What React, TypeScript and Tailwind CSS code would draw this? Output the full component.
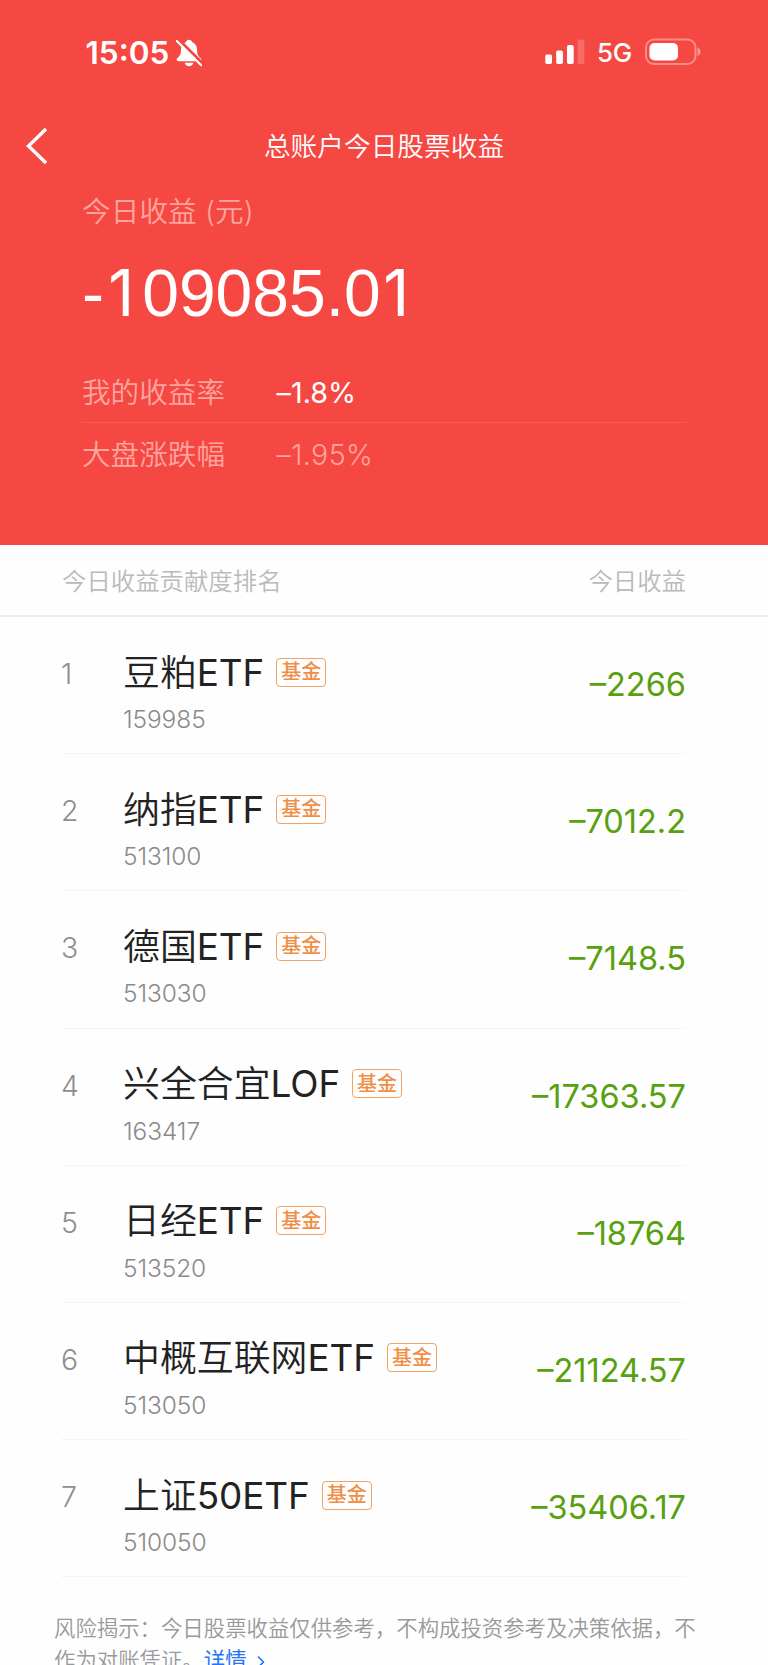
import { ChevronRight } from 'lucide-react';

type Holding = { name: string; suffix: string; code: string; profit: string };

const holdings: Holding[] = [
  { name: '豆粕', suffix: 'ETF', code: '159985', profit: '–2266' },
  { name: '纳指', suffix: 'ETF', code: '513100', profit: '–7012.2' },
  { name: '德国', suffix: 'ETF', code: '513030', profit: '–7148.5' },
  { name: '兴全合宜', suffix: 'LOF', code: '163417', profit: '–17363.57' },
  { name: '日经', suffix: 'ETF', code: '513520', profit: '–18764' },
  { name: '中概互联网', suffix: 'ETF', code: '513050', profit: '–21124.57' },
  { name: '上证', suffix: '50ETF', code: '510050', profit: '–35406.17' },
];

function BellOff() {
  return (
    <svg width="26" height="28" viewBox="0 0 26 28" className="ml-[8px]" fill="none">
      <path d="M13 .8c-1.700 0-2.700 1-3 2.200C6.600 4.200 5 7 5 10.500c0 4.500-1 6.400-3.500 8.600-1.500 1.300-1.200 3.100.8 3.100h21.400c2 0 2.300-1.800.8-3.100C22 16.900 21 15 21 10.500 21 7 19.400 4.200 16 3c-.3-1.200-1.300-2.200-3-2.200z" fill="white" />
      <path d="M8.800 23.800h8.400c-.4 2-2 3.400-4.200 3.400s-3.800-1.400-4.200-3.400z" fill="white" />
      <path d="M1.500 -.2l26 26" stroke="#f64843" strokeWidth="3.500" />
      <path d="M.8 2l24.400 24.300" stroke="white" strokeWidth="2.200" strokeLinecap="round" />
    </svg>
  );
}

function StatusBar() {
  return (
    <div className="flex h-[104px] items-start justify-between pl-[85.500px] pr-[66px] pt-[38px]">
      <div className="flex h-[29px] items-center">
        <span className="w-[82px] text-[31.500px] font-semibold leading-[29px]">15:05</span>
        <BellOff />
      </div>
      <div className="flex h-[27px] items-center">
        <svg width="40" height="26" viewBox="0 0 40 26" fill="white">
          <rect x="0.300" y="15.500" width="6.700" height="9.500" rx="1.700" />
          <rect x="11.200" y="11.500" width="6.700" height="13.500" rx="1.700" />
          <rect x="22" y="6" width="6.700" height="19" rx="1.700" />
          <rect x="32.700" y="0.500" width="6.700" height="24.500" rx="1.700" opacity="0.2" />
        </svg>
        <span className="ml-[12px] w-[36px] whitespace-nowrap pt-[2px] text-[26px] font-[450] leading-[27px] tracking-[-0.3px]">5G</span>
        <svg width="57" height="27" viewBox="0 0 57 27" fill="none" className="ml-[12px]">
          <rect x="1" y="1.500" width="49.500" height="24.500" rx="8" stroke="white" strokeOpacity="0.38" strokeWidth="2" />
          <rect x="4.500" y="5" width="28.500" height="17.500" rx="5" fill="white" />
          <path d="M52.500 9.500c1.800.7 3 2.300 3 4.200s-1.200 3.500-3 4.200z" fill="white" fillOpacity="0.45" />
        </svg>
      </div>
    </div>
  );
}

// Total amount in fixed-width cells, with a "1" that has no foot
function BigAmount({ value }: { value: string }) {
  return (
    <p className="mt-[23px] flex h-[66px] whitespace-pre font-['Liberation_Sans',sans-serif] text-[66px] leading-[66px]">
      {value.split('').map((ch, i) => {
        if (ch === '-') return <span key={i} className="w-[23.500px]">{ch}</span>;
        if (ch === '.') return <span key={i} className="w-[18.300px]">{ch}</span>;
        if (ch === '1') return <span key={i} className="flex w-[36.700px] justify-end pr-[8px] font-['Inter',sans-serif] text-[64px]">{ch}</span>;
        return <span key={i} className="w-[36.700px]">{ch}</span>;
      })}
    </p>
  );
}

function Summary() {
  return (
    <div className="h-[545px] bg-[#f64843] text-white">
      <StatusBar />
      <div className="grid h-[83px] grid-cols-[100px_1fr_100px] items-center">
        <svg width="24" height="38" viewBox="0 0 24 38" fill="none" className="ml-[25px]">
          <path d="M21 2L3.500 19 21 36" stroke="white" strokeWidth="3.400" />
        </svg>
        <h1 className="pt-[1px] text-center text-[26.700px] font-[350]">总账户今日股票收益</h1>
      </div>
      <div className="pl-[82px] pr-[82px]">
        <p className="h-[50px] text-[28.600px] font-[350] leading-[50px] tracking-[0.1px] text-[#ffa49f]">今日收益 (元)</p>
        <BigAmount value="-109085.01" />
        <div className="mt-[35px] flex h-[62px] items-center border-b border-white/10 pt-[3px] text-[28.600px] font-[350]">
          <span className="w-[194.500px] text-[#ffa49f]">我的收益率</span>
          <span className="font-normal tracking-[0.1px]">–1.8%</span>
        </div>
        <div className="flex h-[62px] items-center pt-[2px] text-[28.600px] font-[350] text-[#ffa49f]">
          <span className="w-[194.500px]">大盘涨跌幅</span>
          <span className="tracking-[0.4px]">–1.95%</span>
        </div>
      </div>
    </div>
  );
}

function HoldingRow({ item, rank }: { item: Holding; rank: number }) {
  return (
    <li className="ml-[61px] mr-[82px] flex h-[137.200px] items-start border-b border-[#f5f5f5]">
      <span className="mt-[37px] w-[62px] text-[28.500px] font-light leading-[40px] text-[#8e8e8e]">{rank}</span>
      <div className="flex-1">
        <div className="mt-[32px] flex h-[46px] items-center">
          <span className="whitespace-nowrap pt-[1px] text-[36.900px] font-[350] leading-[46px] text-[#222]">
            {item.name}
            <span className="font-normal tracking-[-0.1px]">{item.suffix}</span>
          </span>
          <span className="ml-[12px] flex h-[29px] w-[50px] items-center justify-center whitespace-nowrap rounded-[4px] border border-[#f0a364] text-[20px] font-medium leading-[20px] text-[#ee8f45]">
            基金
          </span>
        </div>
        <p className="mt-[9px] text-[24.500px] font-light leading-[30px] tracking-[-0.1px] text-[#8a8a8a]">{item.code}</p>
      </div>
      <span className="mt-[48px] whitespace-nowrap text-[32.500px] leading-[40px] text-[#58a010]">{item.profit}</span>
    </li>
  );
}

export default function App() {
  return (
    <div className="h-[1665px] w-[768px] overflow-hidden bg-[#fefefe] font-['Inter','Noto_Sans_CJK_SC',sans-serif]">
      <Summary />
      <div className="flex h-[72px] items-center justify-between border-b-2 border-[#ededed] pl-[62px] pr-[82px] pt-[3px] text-[24.400px] font-[350] text-[#bababa]">
        <span>今日收益贡献度排名</span>
        <span>今日收益</span>
      </div>
      <ul>
        {holdings.map((item, i) => (
          <HoldingRow key={item.code} item={item} rank={i + 1} />
        ))}
      </ul>
      <p className="ml-[54px] mt-[35px] w-[660px] text-[21.400px] font-[350] leading-[32px] text-[#999]">
        风险揭示：今日股票收益仅供参考，不构成投资参考及决策依据，不
        <br />
        作为对账凭证。
        <a className="font-normal text-[#2474f5]">
          详情
          <ChevronRight size={20} strokeWidth={2} className="ml-[4px] inline" />
        </a>
      </p>
    </div>
  );
}
